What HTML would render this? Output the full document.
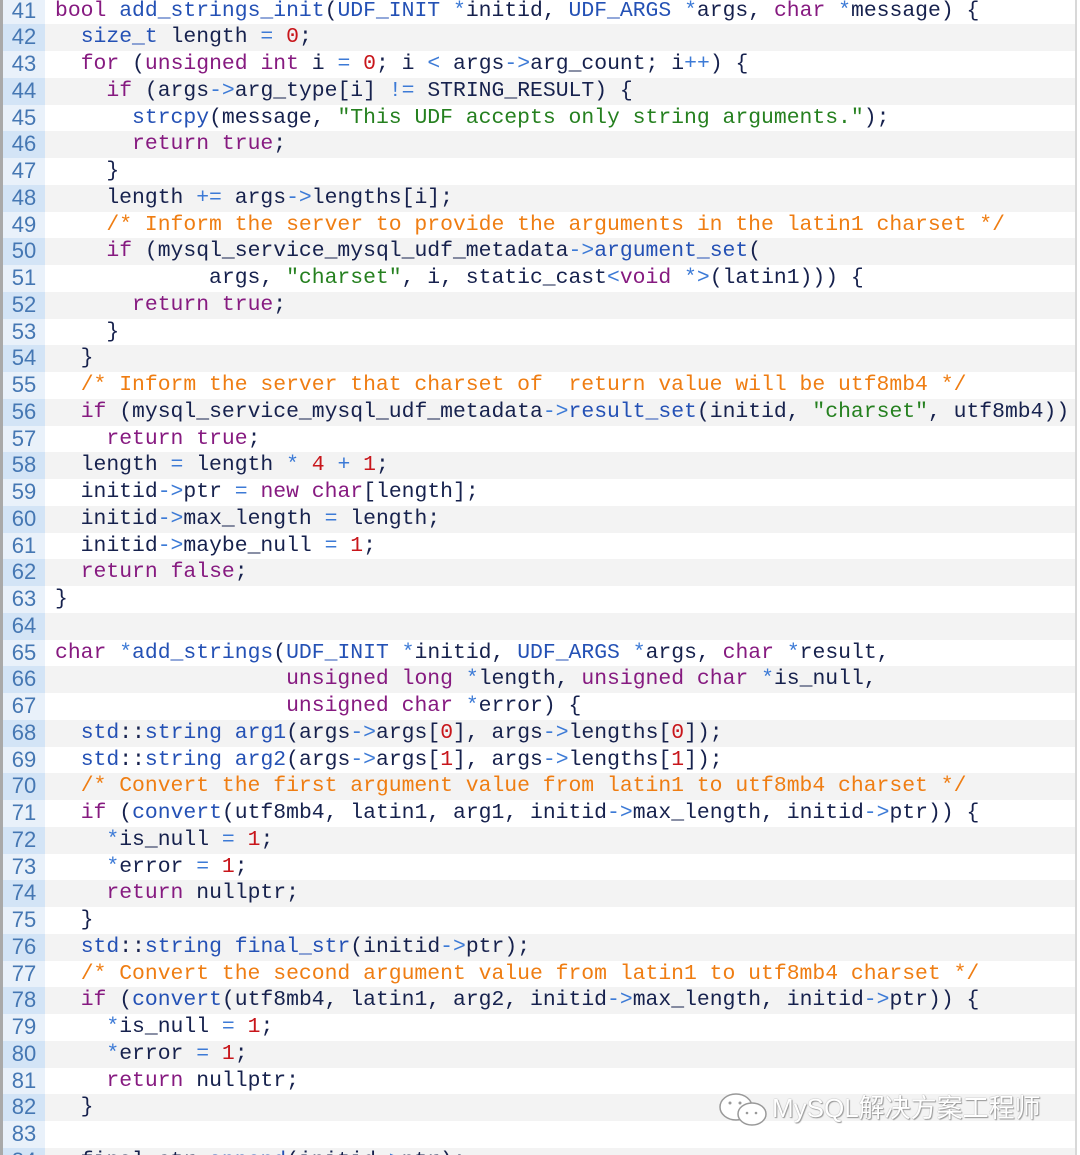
<!DOCTYPE html>
<html style="overflow:hidden;height:1155px"><head><meta charset="utf-8"><style>
body{margin:0;background:#fff;width:1080px;height:1155px;overflow:hidden;position:relative}
#w{position:absolute;left:0;top:-2.5px;width:1075px;border-right:2px solid #d8d8d8}
.r{height:26.75px;line-height:26.75px;display:flex;font-family:"Liberation Mono",monospace;font-size:21.4px;color:#16214d;white-space:pre}
.g{width:42px;border-left:3px solid #a9a9a9;color:#4577b3;text-align:center;background:#e9f1fa;flex:none;font-family:"Liberation Sans",sans-serif;font-size:22px}
.r:nth-child(even) .g{background:#d3e4f6}
.r:nth-child(even){background:#f3f3f3}
.x{padding-left:10px}
.k{color:#861a80}.f{color:#2451b5}.n{color:#c8161b}.s{color:#25801f}.c{color:#ef7d12}.o{color:#3c7ad6}
#wm{position:absolute;left:716px;top:1088px;font-family:"Liberation Sans","Noto Sans CJK SC",sans-serif;font-size:26px;color:#fff;text-shadow:0 0 1px #888,1px 1px 1px #999}
</style></head><body>
<div id="w">
<div class="r"><div class="g">41</div><div class="x"><span class="k">bool</span> <span class="f">add_strings_init</span>(<span class="f">UDF_INIT</span> <span class="o">*</span>initid, <span class="f">UDF_ARGS</span> <span class="o">*</span>args, <span class="k">char</span> <span class="o">*</span>message) {</div></div>
<div class="r"><div class="g">42</div><div class="x">  <span class="f">size_t</span> length <span class="o">=</span> <span class="n">0</span>;</div></div>
<div class="r"><div class="g">43</div><div class="x">  <span class="k">for</span> (<span class="k">unsigned</span> <span class="k">int</span> i <span class="o">=</span> <span class="n">0</span>; i <span class="o">&lt;</span> args<span class="o">-&gt;</span>arg_count; i<span class="o">++</span>) {</div></div>
<div class="r"><div class="g">44</div><div class="x">    <span class="k">if</span> (args<span class="o">-&gt;</span>arg_type[i] <span class="o">!=</span> STRING_RESULT) {</div></div>
<div class="r"><div class="g">45</div><div class="x">      <span class="f">strcpy</span>(message, <span class="s">"This UDF accepts only string arguments."</span>);</div></div>
<div class="r"><div class="g">46</div><div class="x">      <span class="k">return</span> <span class="k">true</span>;</div></div>
<div class="r"><div class="g">47</div><div class="x">    }</div></div>
<div class="r"><div class="g">48</div><div class="x">    length <span class="o">+=</span> args<span class="o">-&gt;</span>lengths[i];</div></div>
<div class="r"><div class="g">49</div><div class="x">    <span class="c">/* Inform the server to provide the arguments in the latin1 charset */</span></div></div>
<div class="r"><div class="g">50</div><div class="x">    <span class="k">if</span> (mysql_service_mysql_udf_metadata<span class="o">-&gt;</span><span class="f">argument_set</span>(</div></div>
<div class="r"><div class="g">51</div><div class="x">            args, <span class="s">"charset"</span>, i, static_cast<span class="o">&lt;</span><span class="k">void</span> <span class="o">*&gt;</span>(latin1))) {</div></div>
<div class="r"><div class="g">52</div><div class="x">      <span class="k">return</span> <span class="k">true</span>;</div></div>
<div class="r"><div class="g">53</div><div class="x">    }</div></div>
<div class="r"><div class="g">54</div><div class="x">  }</div></div>
<div class="r"><div class="g">55</div><div class="x">  <span class="c">/* Inform the server that charset of  return value will be utf8mb4 */</span></div></div>
<div class="r"><div class="g">56</div><div class="x">  <span class="k">if</span> (mysql_service_mysql_udf_metadata<span class="o">-&gt;</span><span class="f">result_set</span>(initid, <span class="s">"charset"</span>, utf8mb4))</div></div>
<div class="r"><div class="g">57</div><div class="x">    <span class="k">return</span> <span class="k">true</span>;</div></div>
<div class="r"><div class="g">58</div><div class="x">  length <span class="o">=</span> length <span class="o">*</span> <span class="n">4</span> <span class="o">+</span> <span class="n">1</span>;</div></div>
<div class="r"><div class="g">59</div><div class="x">  initid<span class="o">-&gt;</span>ptr <span class="o">=</span> <span class="k">new</span> <span class="k">char</span>[length];</div></div>
<div class="r"><div class="g">60</div><div class="x">  initid<span class="o">-&gt;</span>max_length <span class="o">=</span> length;</div></div>
<div class="r"><div class="g">61</div><div class="x">  initid<span class="o">-&gt;</span>maybe_null <span class="o">=</span> <span class="n">1</span>;</div></div>
<div class="r"><div class="g">62</div><div class="x">  <span class="k">return</span> <span class="k">false</span>;</div></div>
<div class="r"><div class="g">63</div><div class="x">}</div></div>
<div class="r"><div class="g">64</div><div class="x"> </div></div>
<div class="r"><div class="g">65</div><div class="x"><span class="k">char</span> <span class="o">*</span><span class="f">add_strings</span>(<span class="f">UDF_INIT</span> <span class="o">*</span>initid, <span class="f">UDF_ARGS</span> <span class="o">*</span>args, <span class="k">char</span> <span class="o">*</span>result,</div></div>
<div class="r"><div class="g">66</div><div class="x">                  <span class="k">unsigned</span> <span class="k">long</span> <span class="o">*</span>length, <span class="k">unsigned</span> <span class="k">char</span> <span class="o">*</span>is_null,</div></div>
<div class="r"><div class="g">67</div><div class="x">                  <span class="k">unsigned</span> <span class="k">char</span> <span class="o">*</span>error) {</div></div>
<div class="r"><div class="g">68</div><div class="x">  <span class="f">std</span>::<span class="f">string</span> <span class="f">arg1</span>(args<span class="o">-&gt;</span>args[<span class="n">0</span>], args<span class="o">-&gt;</span>lengths[<span class="n">0</span>]);</div></div>
<div class="r"><div class="g">69</div><div class="x">  <span class="f">std</span>::<span class="f">string</span> <span class="f">arg2</span>(args<span class="o">-&gt;</span>args[<span class="n">1</span>], args<span class="o">-&gt;</span>lengths[<span class="n">1</span>]);</div></div>
<div class="r"><div class="g">70</div><div class="x">  <span class="c">/* Convert the first argument value from latin1 to utf8mb4 charset */</span></div></div>
<div class="r"><div class="g">71</div><div class="x">  <span class="k">if</span> (<span class="f">convert</span>(utf8mb4, latin1, arg1, initid<span class="o">-&gt;</span>max_length, initid<span class="o">-&gt;</span>ptr)) {</div></div>
<div class="r"><div class="g">72</div><div class="x">    <span class="o">*</span>is_null <span class="o">=</span> <span class="n">1</span>;</div></div>
<div class="r"><div class="g">73</div><div class="x">    <span class="o">*</span>error <span class="o">=</span> <span class="n">1</span>;</div></div>
<div class="r"><div class="g">74</div><div class="x">    <span class="k">return</span> nullptr;</div></div>
<div class="r"><div class="g">75</div><div class="x">  }</div></div>
<div class="r"><div class="g">76</div><div class="x">  <span class="f">std</span>::<span class="f">string</span> <span class="f">final_str</span>(initid<span class="o">-&gt;</span>ptr);</div></div>
<div class="r"><div class="g">77</div><div class="x">  <span class="c">/* Convert the second argument value from latin1 to utf8mb4 charset */</span></div></div>
<div class="r"><div class="g">78</div><div class="x">  <span class="k">if</span> (<span class="f">convert</span>(utf8mb4, latin1, arg2, initid<span class="o">-&gt;</span>max_length, initid<span class="o">-&gt;</span>ptr)) {</div></div>
<div class="r"><div class="g">79</div><div class="x">    <span class="o">*</span>is_null <span class="o">=</span> <span class="n">1</span>;</div></div>
<div class="r"><div class="g">80</div><div class="x">    <span class="o">*</span>error <span class="o">=</span> <span class="n">1</span>;</div></div>
<div class="r"><div class="g">81</div><div class="x">    <span class="k">return</span> nullptr;</div></div>
<div class="r"><div class="g">82</div><div class="x">  }</div></div>
<div class="r"><div class="g">83</div><div class="x"> </div></div>
<div class="r"><div class="g">84</div><div class="x">  final_str.<span class="f">append</span>(initid<span class="o">-&gt;</span>ptr);</div></div>
</div>
<div id="wm"><svg width="56" height="40" viewBox="0 0 56 40" style="vertical-align:middle"><g fill="#fff" stroke="#999" stroke-width="1.5"><ellipse cx="20" cy="17" rx="16" ry="13"/><ellipse cx="36" cy="24" rx="14" ry="11"/></g><g fill="#999"><circle cx="14" cy="13" r="1.5"/><circle cx="24" cy="13" r="1.5"/><circle cx="31" cy="23" r="1.3"/><circle cx="40" cy="23" r="1.3"/></g></svg>MySQL解决方案工程师</div>
</body></html>
